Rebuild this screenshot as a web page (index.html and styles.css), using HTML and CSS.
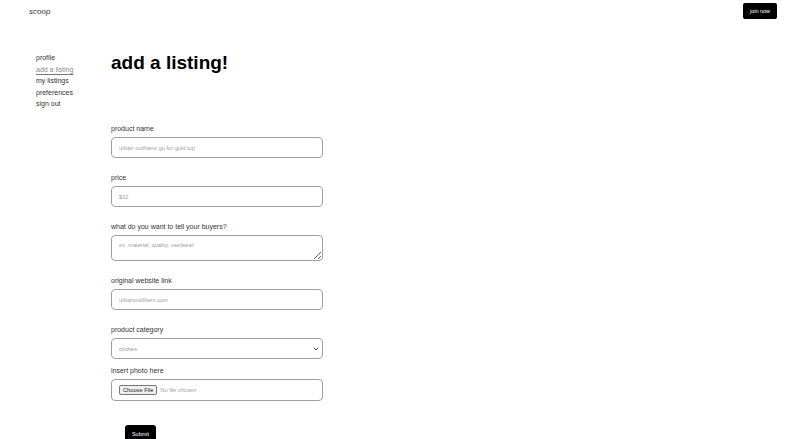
FILE: index.html
```html
<!DOCTYPE html>
<html lang="en">
<head>
    <meta charset="UTF-8">
    <meta name="viewport" content="width=device-width, initial-scale=1.0">
    <title>scoop - add a listing</title>
    <link rel="stylesheet" href="styles.css">
</head>
<body>
    <header class="topbar">
        <a class="logo" href="#">scoop</a>
        <button class="join-btn">join now</button>
    </header>

    <div class="page">
        <nav class="sidebar">
            <a href="#">profile</a>
            <a href="#" class="active">add a listing</a>
            <a href="#">my listings</a>
            <a href="#">preferences</a>
            <a href="#">sign out</a>
        </nav>

        <main class="content">
            <h1>add a listing!</h1>

            <form class="listing-form">
                <div class="field">
                    <label for="name">product name</label>
                    <input type="text" id="name" placeholder="urban outfitters go for gold top">
                </div>
                <div class="field">
                    <label for="price">price</label>
                    <input type="text" id="price" placeholder="$12">
                </div>
                <div class="field">
                    <label for="desc">what do you want to tell your buyers?</label>
                    <textarea id="desc" placeholder="ex. material, quality, use/wear"></textarea>
                </div>
                <div class="field">
                    <label for="link">original website link</label>
                    <input type="text" id="link" placeholder="urbanoutfitters.com">
                </div>
                <div class="field tight">
                    <label for="category">product category</label>
                    <div class="select-wrap">
                        <select id="category">
                            <option>clothes</option>
                            <option>shoes</option>
                            <option>accessories</option>
                        </select>
                        <svg class="chevron" width="6" height="4" viewBox="0 0 6 4">
                            <path d="M0.7 0.7 L3 3 L5.3 0.7" fill="none" stroke="#444" stroke-width="1"/>
                        </svg>
                    </div>
                </div>
                <div class="field">
                    <label for="photo">insert photo here</label>
                    <div class="file-box">
                        <input type="file" id="photo">
                    </div>
                </div>
                <button type="submit" class="submit-btn">Submit</button>
            </form>
        </main>
    </div>
</body>
</html>
```

FILE: styles.css
```css
* {
    box-sizing: border-box;
}
body {
    margin: 0;
    font-family: "Liberation Sans", Arial, sans-serif;
    background-color: #fff;
    color: #111;
}
.topbar {
    display: flex;
    justify-content: space-between;
    align-items: center;
    height: 22px;
    padding: 0 29px;
}
.logo {
    font-size: 8px;
    font-style: italic;
    color: #333;
    text-decoration: none;
}
.join-btn {
    width: 34px;
    height: 16px;
    padding: 0;
    background-color: #000;
    color: #fff;
    border: none;
    border-radius: 2px;
    font-family: inherit;
    font-size: 5.5px;
}
.page {
    display: flex;
    padding-top: 30px;
}
.sidebar {
    display: flex;
    flex-direction: column;
    align-items: flex-start;
    width: 111px;
    padding-left: 36px;
}
.sidebar a {
    font-size: 7px;
    line-height: 11.5px;
    color: #333;
    text-decoration: none;
}
.sidebar a.active {
    color: #8a8a8a;
    text-decoration: underline;
    text-underline-offset: 2px;
    text-decoration-color: #777;
}
.content h1 {
    margin: 0;
    font-size: 19px;
    line-height: 22px;
    font-weight: bold;
    color: #000;
}
.listing-form {
    margin-top: 51px;
    width: 212px;
}
.field {
    margin-bottom: 16px;
}
.field.tight {
    margin-bottom: 8px;
}
.field label {
    display: block;
    font-size: 7px;
    line-height: 8px;
    margin-bottom: 4px;
    color: #333;
}
.field input[type="text"],
.field textarea,
.field select {
    display: block;
    width: 212px;
    height: 21px;
    padding: 0 7px;
    border: 1px solid #a0a0a0;
    border-radius: 4px;
    background-color: #fff;
    font-family: inherit;
    font-size: 5.7px;
    color: #999;
}
.field textarea {
    height: 26px;
    padding-top: 6px;
    resize: vertical;
}
.select-wrap {
    position: relative;
}
.field select {
    appearance: none;
    -webkit-appearance: none;
}
.chevron {
    position: absolute;
    right: 4px;
    top: 9px;
}
::placeholder {
    color: #a0a0a0;
}
.file-box {
    height: 22px;
    padding: 0 7px;
    display: flex;
    align-items: center;
    border: 1px solid #a0a0a0;
    border-radius: 4px;
}
.file-box input {
    font-family: inherit;
    font-size: 5.7px;
    color: #a0a0a0;
}
.file-box input::file-selector-button {
    font-family: inherit;
    font-size: 5.7px;
    color: #222;
    background-color: #efefef;
    border: 1px solid #767676;
    border-radius: 2px;
    padding: 1px 3px;
    margin-right: 3px;
}
.submit-btn {
    margin-top: 8px;
    margin-left: 14px;
    width: 31px;
    height: 17px;
    padding: 0;
    background-color: #000;
    color: #fff;
    border: none;
    border-radius: 3px;
    font-family: inherit;
    font-size: 5.5px;
}
```
